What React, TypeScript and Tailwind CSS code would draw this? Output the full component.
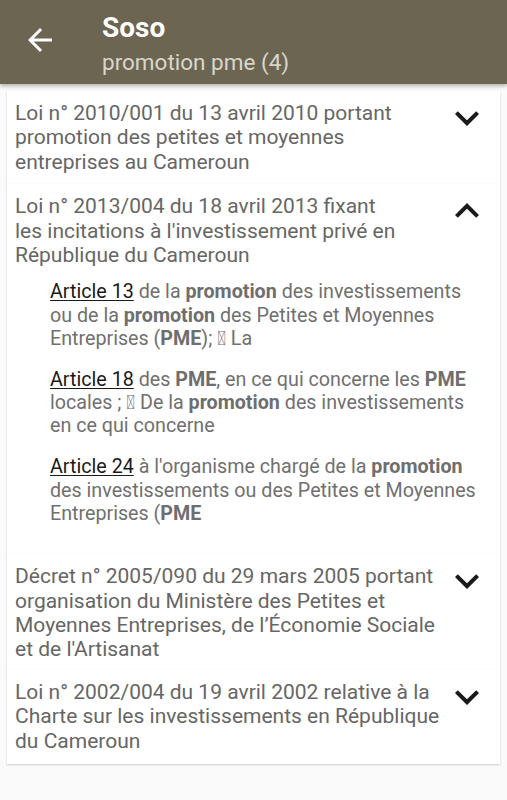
import React from 'react';

type Seg = { t: string; b?: boolean };

interface Hit {
  label: string;
  segs: Seg[];
}

interface Law {
  title: string;
  open?: boolean;
  hits?: Hit[];
  pb: string;
}

const BOX = '\uF0B7';

const laws: Law[] = [
  { title: 'Loi n° 2010/001 du 13 avril 2010 portant promotion des petites et moyennes entreprises au Cameroun', pb: 'pb-[10px]' },
  {
    title: "Loi n° 2013/004 du 18 avril 2013 fixant\nles incitations à l'investissement privé en République du Cameroun",
    open: true,
    pb: 'pb-0',
    hits: [
      {
        label: 'Article 13',
        segs: [
          { t: ' de la ' }, { t: 'promotion', b: true }, { t: ' des investissements ou de la ' },
          { t: 'promotion', b: true }, { t: ' des Petites et Moyennes Entreprises (' }, { t: 'PME', b: true },
          { t: `); ${BOX} La` },
        ],
      },
      {
        label: 'Article 18',
        segs: [
          { t: ' des ' }, { t: 'PME', b: true }, { t: ', en ce qui concerne les ' }, { t: 'PME', b: true },
          { t: ` locales ; ${BOX} De la ` }, { t: 'promotion', b: true }, { t: ' des investissements en ce qui concerne' },
        ],
      },
      {
        label: 'Article 24',
        segs: [
          { t: " à l'organisme chargé de la " }, { t: 'promotion', b: true },
          { t: ' des investissements ou des Petites et Moyennes Entreprises (' }, { t: 'PME', b: true },
        ],
      },
    ],
  },
  { title: "Décret n° 2005/090 du 29 mars 2005 portant organisation du Ministère des Petites et Moyennes Entreprises, de l’Économie Sociale et de l'Artisanat", pb: 'pb-[8px]' },
  { title: 'Loi n° 2002/004 du 19 avril 2002 relative à la Charte sur les investissements en République du Cameroun', pb: 'pb-[11px]' },
];

const Chevron = ({ up }: { up?: boolean }) => (
  <svg width="48" height="48" viewBox="0 0 24 24" className={up ? 'rotate-180' : ''}>
    <path d="M7.41 8.59L12 13.17l4.59-4.58L18 10l-6 6-6-6 1.41-1.41z" fill="#1c1a18" />
  </svg>
);

const LawCard = ({ law }: { law: Law }) => (
  <div className="bg-white shadow-[0_1px_2px_rgba(0,0,0,0.18)]">
    <div className={`flex items-start pl-[8px] pt-[10px] ${law.pb}`}>
      <div className="w-[430px] whitespace-pre-line text-[21px] leading-[24.4px] text-[#666666]">{law.title}</div>
      <div className="-mt-[7px] ml-[-2px]">
        <Chevron up={law.open} />
      </div>
    </div>
    {law.open && law.hits && (
      <div className="pl-[43px] pr-[14px] pt-[13px] pb-[29px] flex flex-col gap-[17.5px]">
        {law.hits.map((h, i) => (
          <p key={i} className="text-[19.7px] leading-[23.3px] text-[#707070]">
            <span className="underline text-[#1a1a1a] underline-offset-[2px]">{h.label}</span>
            {h.segs.map((s, j) =>
              s.b ? (
                <b key={j} className="font-bold text-[#6e6e6e]">{s.t}</b>
              ) : (
                <span key={j}>{s.t}</span>
              )
            )}
          </p>
        ))}
      </div>
    )}
  </div>
);

export default function App() {
  return (
    <div className="min-h-[800px] bg-[#fafafa] font-['Roboto',sans-serif]">
      <header className="h-[84px] bg-[#6b6552] flex items-start shadow-[0_2px_4px_rgba(0,0,0,0.3)] relative">
        <div className="w-[102px] h-[84px] flex items-start pl-[22px] pt-[22px]">
          <svg width="36" height="36" viewBox="0 0 24 24">
            <path d="M20 11H7.83l5.59-5.59L12 4l-8 8 8 8 1.41-1.41L7.83 13H20v-2z" fill="#ffffff" />
          </svg>
        </div>
        <div className="flex flex-col pt-[11px]">
          <div className="text-white font-bold text-[28px] leading-[34px]">Soso</div>
          <div className="mt-[2px] text-[#d9d6cc] text-[22.5px] leading-[30px]">promotion pme (4)</div>
        </div>
      </header>
      <main className="px-[7px] pt-[7px]">
        {laws.map((l, i) => (
          <LawCard key={i} law={l} />
        ))}
      </main>
    </div>
  );
}
